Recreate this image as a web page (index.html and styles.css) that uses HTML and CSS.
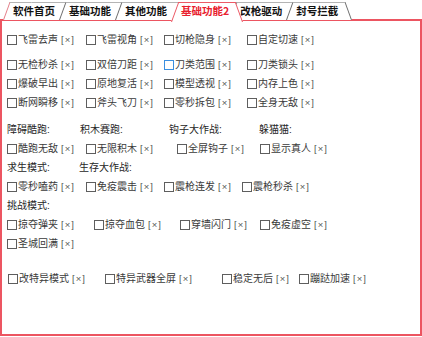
FILE: index.html
```html
<!DOCTYPE html>
<html lang="zh-CN">
<head>
<meta charset="utf-8">
<title>基础功能2</title>
<link rel="stylesheet" href="styles.css">
</head>
<body>
<div class="app">
  <div class="tabs">
    <div class="tab">软件首页</div>
    <div class="tab">基础功能</div>
    <div class="tab">其他功能</div>
    <div class="tab active">基础功能2</div>
    <div class="tab">改枪驱动</div>
    <div class="tab">封号拦截</div>
  </div>
  <div class="panel">
    <div class="row cols-a">
      <label class="opt"><span class="cb"></span>飞雷去声<span class="x">[×]</span></label>
      <label class="opt"><span class="cb"></span>飞雷视角<span class="x">[×]</span></label>
      <label class="opt"><span class="cb"></span>切枪隐身<span class="x">[×]</span></label>
      <label class="opt"><span class="cb"></span>自定切速<span class="x">[×]</span></label>
    </div>
    <div class="row cols-a sp-1">
      <label class="opt"><span class="cb"></span>无检秒杀<span class="x">[×]</span></label>
      <label class="opt"><span class="cb"></span>双倍刀距<span class="x">[×]</span></label>
      <label class="opt"><span class="cb hover"></span>刀类范围<span class="x">[×]</span></label>
      <label class="opt"><span class="cb"></span>刀类锁头<span class="x">[×]</span></label>
    </div>
    <div class="row cols-a">
      <label class="opt"><span class="cb"></span>爆破早出<span class="x">[×]</span></label>
      <label class="opt"><span class="cb"></span>原地复活<span class="x">[×]</span></label>
      <label class="opt"><span class="cb"></span>模型透视<span class="x">[×]</span></label>
      <label class="opt"><span class="cb"></span>内存上色<span class="x">[×]</span></label>
    </div>
    <div class="row cols-a">
      <label class="opt"><span class="cb"></span>断网瞬移<span class="x">[×]</span></label>
      <label class="opt"><span class="cb"></span>斧头飞刀<span class="x">[×]</span></label>
      <label class="opt"><span class="cb"></span>零秒拆包<span class="x">[×]</span></label>
      <label class="opt"><span class="cb"></span>全身无敌<span class="x">[×]</span></label>
    </div>
    <div class="row cols-b sp-2">
      <span class="lbl">障碍酷跑:</span>
      <span class="lbl">积木赛跑:</span>
      <span class="lbl">钩子大作战:</span>
      <span class="lbl">躲猫猫:</span>
    </div>
    <div class="row cols-c">
      <label class="opt"><span class="cb"></span>酷跑无敌<span class="x">[×]</span></label>
      <label class="opt"><span class="cb"></span>无限积木<span class="x">[×]</span></label>
      <label class="opt"><span class="cb"></span>全屏钩子<span class="x">[×]</span></label>
      <label class="opt"><span class="cb"></span>显示真人<span class="x">[×]</span></label>
    </div>
    <div class="row cols-d">
      <span class="lbl">求生模式:</span>
      <span class="lbl">生存大作战:</span>
    </div>
    <div class="row cols-e">
      <label class="opt"><span class="cb"></span>零秒嗑药<span class="x">[×]</span></label>
      <label class="opt"><span class="cb"></span>免疫震击<span class="x">[×]</span></label>
      <label class="opt"><span class="cb"></span>震枪连发<span class="x">[×]</span></label>
      <label class="opt"><span class="cb"></span>震枪秒杀<span class="x">[×]</span></label>
    </div>
    <div class="row">
      <span class="lbl">挑战模式:</span>
    </div>
    <div class="row cols-f">
      <label class="opt"><span class="cb"></span>掠夺弹夹<span class="x">[×]</span></label>
      <label class="opt"><span class="cb"></span>掠夺血包<span class="x">[×]</span></label>
      <label class="opt"><span class="cb"></span>穿墙闪门<span class="x">[×]</span></label>
      <label class="opt"><span class="cb"></span>免疫虚空<span class="x">[×]</span></label>
    </div>
    <div class="row">
      <label class="opt"><span class="cb"></span>圣城回满<span class="x">[×]</span></label>
    </div>
    <div class="row cols-g sp-3">
      <label class="opt"><span class="cb"></span>改特异模式<span class="x">[×]</span></label>
      <label class="opt"><span class="cb"></span>特异武器全屏<span class="x">[×]</span></label>
      <label class="opt"><span class="cb"></span>稳定无后<span class="x">[×]</span></label>
      <label class="opt"><span class="cb"></span>蹦跶加速<span class="x">[×]</span></label>
    </div>
  </div>
</div>
</body>
</html>
```

FILE: styles.css
```css
* { box-sizing: border-box; }

html, body {
  margin: 0;
  padding: 0;
  background: #ffffff;
}

body {
  width: 422px;
  height: 337px;
  overflow: hidden;
  font-family: "Liberation Sans", "Noto Sans CJK SC", sans-serif;
  font-size: 10px;
  color: #333333;
}

.app {
  display: flex;
  flex-direction: column;
}

/* ---------- tabs ---------- */
.tabs {
  position: relative;
  z-index: 1;
  display: flex;
  padding: 2px 0 0 3px;
  height: 20px;
}

.tab {
  position: relative;
  z-index: 0;
  height: 18px;
  display: flex;
  align-items: center;
  padding: 0 17px 0 10px;
  margin-left: -13px;
  font-family: "Noto Sans CJK SC", sans-serif;
  font-size: 10.5px;
  font-weight: 700;
  color: #111111;
  line-height: 18px;
  white-space: nowrap;
}

.tab:first-child { margin-left: 0; }

.tab::before,
.tab::after {
  content: "";
  position: absolute;
  top: 0;
  bottom: 0;
  z-index: -1;
  background: #ffffff;
  border-top: 1px solid #b4b4b4;
  transform-origin: bottom;
}

.tab::before {
  left: 0;
  right: 50%;
  border-left: 1px solid #6e6e6e;
  transform: skewX(-20deg);
}

.tab::after {
  left: 50%;
  right: 0;
  border-right: 1px solid #6e6e6e;
  transform: skewX(20deg);
}

.tab.active {
  z-index: 2;
  color: #e8202e;
  height: 20px;
  margin-bottom: -2px;
  padding: 0 14px 2px 10px;
}

.tab.active::before,
.tab.active::after {
  border-color: #ec5a66;
}

.tab:first-child::before { border-left-color: #e4808a; }

.tab:last-child { padding-right: 14px; }

/* ---------- panel ---------- */
.panel {
  margin-top: -1px;
  height: 317px;
  border: 2px solid #ec5561;
  padding: 11px 5px 0 5px;
  display: flex;
  flex-direction: column;
  gap: 3px;
}

.row {
  display: grid;
  grid-template-columns: auto;
  justify-content: start;
  height: 16px;
  line-height: 16px;
  align-items: center;
}

.sp-1 { margin-top: 6px; }
.sp-2 { margin-top: 8px; }
.sp-3 { margin-top: 16px; }

.cols-a { grid-template-columns: 79px 78px 83px auto; }
.cols-b { grid-template-columns: 73px 89px 90px auto; }
.cols-c { grid-template-columns: 79px 91px 83px auto; }
.cols-d { grid-template-columns: 72px auto; }
.cols-e { grid-template-columns: 79px 78px 78px auto; }
.cols-f { grid-template-columns: 87px 86px 80px auto; }
.cols-g { grid-template-columns: 97px 117px 77px auto; padding-left: 1px; }

.opt {
  display: flex;
  align-items: center;
  white-space: nowrap;
  color: #3a3a3a;
}

.cb {
  display: inline-block;
  width: 10px;
  height: 10px;
  border: 1px solid #5e5e5e;
  background: #ffffff;
  margin-right: 1px;
  flex: none;
}

.cb.hover { border-color: #3b8fe0; }

.x {
  margin-left: 3px;
  color: #555555;
  font-size: 9.5px;
  letter-spacing: 1px;
}

.lbl {
  white-space: nowrap;
  color: #262626;
}
```
